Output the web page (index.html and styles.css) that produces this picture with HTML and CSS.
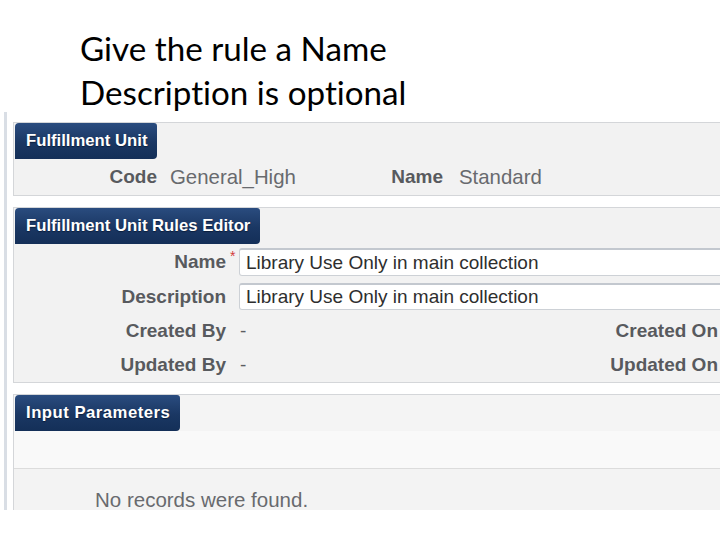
FILE: index.html
```html
<!DOCTYPE html>
<html>
<head>
<meta charset="utf-8">
<link rel="stylesheet" href="styles.css">
</head>
<body>
<div class="caption">
  <p>Give the rule a Name</p>
  <p>Description is optional</p>
</div>
<div class="shot">
  <div class="edge"></div>
  <div class="content">
    <section class="panel">
      <div class="tabrow"><div class="tab">Fulfillment Unit</div></div>
      <div class="unitrow">
        <span class="label code-label">Code</span>
        <span class="value code-value">General_High</span>
        <span class="label name-label">Name</span>
        <span class="value">Standard</span>
      </div>
    </section>

    <section class="panel">
      <div class="tabrow"><div class="tab">Fulfillment Unit Rules Editor</div></div>
      <div class="form">
        <div class="frow input-row first">
          <span class="label flabel">Name<span class="req">*</span></span>
          <div class="input">Library Use Only in main collection</div>
        </div>
        <div class="frow input-row second">
          <span class="label flabel">Description</span>
          <div class="input">Library Use Only in main collection</div>
        </div>
        <div class="frow info-row">
          <span class="label flabel">Created By</span>
          <span class="dash">-</span>
          <span class="label rlabel">Created On</span>
        </div>
        <div class="frow info-row">
          <span class="label flabel">Updated By</span>
          <span class="dash">-</span>
          <span class="label rlabel">Updated On</span>
        </div>
      </div>
    </section>

    <section class="panel params">
      <div class="tabrow"><div class="tab tab-wide">Input Parameters</div></div>
      <div class="toolbar"></div>
      <div class="empty">No records were found.</div>
    </section>
  </div>
</div>
</body>
</html>
```

FILE: styles.css
```css
html, body {
  margin: 0;
  padding: 0;
  background: #ffffff;
}
body {
  width: 720px;
  height: 540px;
  overflow: hidden;
}

.caption {
  height: 112px;
  box-sizing: border-box;
  padding: 26px 0 0 80px;
  font-family: Lato, "Open Sans", sans-serif;
  font-size: 33.2px;
  line-height: 44px;
  color: #000;
  font-variant-ligatures: none;
}
.caption p {
  margin: 0;
  white-space: nowrap;
}

.shot {
  height: 398px;
  display: flex;
  overflow: hidden;
  padding-left: 4px;
}
.edge {
  width: 3px;
  flex: none;
  background: #d9dee5;
}
.content {
  flex: none;
  width: 900px;
  margin-left: 6px;
  padding-top: 10px;
  font-family: "Liberation Sans", Arial, sans-serif;
}

.panel {
  border: 1px solid #d4d6d9;
  background: #f2f2f2;
  margin-bottom: 11px;
}

.tabrow {
  height: 36px;
  display: flex;
  padding-left: 1px;
}
.tab {
  height: 36px;
  box-sizing: border-box;
  padding: 0 10px 0 11px;
  display: flex;
  align-items: center;
  background: linear-gradient(#2a4c7f, #1a3763 55%, #142f58);
  border-radius: 4px 3px 4px 0;
  color: #ffffff;
  font-weight: bold;
  font-size: 16.7px;
  text-shadow: 0 1px 1px #0b1e3c;
  white-space: nowrap;
}
.tab-wide {
  letter-spacing: 0.5px;
  padding-right: 10px;
}

.label {
  font-weight: bold;
  font-size: 19px;
  color: #585a5e;
  white-space: nowrap;
}
.value {
  font-size: 20.4px;
  color: #686a6e;
  white-space: nowrap;
}

.unitrow {
  height: 36px;
  display: flex;
  align-items: center;
}
.code-label {
  width: 143px;
  text-align: right;
}
.code-value {
  width: 180px;
  margin-left: 13px;
}
.name-label {
  width: 93px;
  text-align: right;
  margin-right: 16px;
}

.form {
  padding-top: 4px;
}
.frow {
  display: flex;
  align-items: center;
}
.flabel {
  width: 212px;
  text-align: right;
  flex: none;
  position: relative;
}
.req {
  position: absolute;
  left: 216px;
  top: -3px;
  color: #d23b3b;
  font-size: 14px;
  font-weight: normal;
}
.input-row.second {
  margin-top: 7px;
}
.input {
  margin-left: 13px;
  flex: 1;
  height: 28px;
  box-sizing: border-box;
  background: #ffffff;
  border: 1px solid #cdd1d6;
  border-top: 2px solid #c3c8cf;
  border-radius: 3px 0 0 3px;
  padding-left: 6px;
  display: flex;
  align-items: center;
  font-size: 19px;
  color: #2e2e2e;
  white-space: nowrap;
}
.input-row.second .input {
  height: 27px;
}
.info-row {
  height: 34px;
}
.input-row.second + .info-row {
  margin-top: 4px;
}
.dash {
  width: 278px;
  margin-left: 14px;
  font-size: 19px;
  color: #5b5d61;
}
.rlabel {
  width: 200px;
  text-align: right;
}

.params {
  background: #f3f3f3;
}
.params .tabrow {
  background: #f4f4f4;
}
.toolbar {
  height: 37px;
  background: #f9f9f9;
  border-bottom: 1px solid #dcdcdc;
}
.empty {
  padding: 21px 0 20px 81px;
  font-size: 20.5px;
  line-height: 20px;
  color: #686a6e;
}
```
